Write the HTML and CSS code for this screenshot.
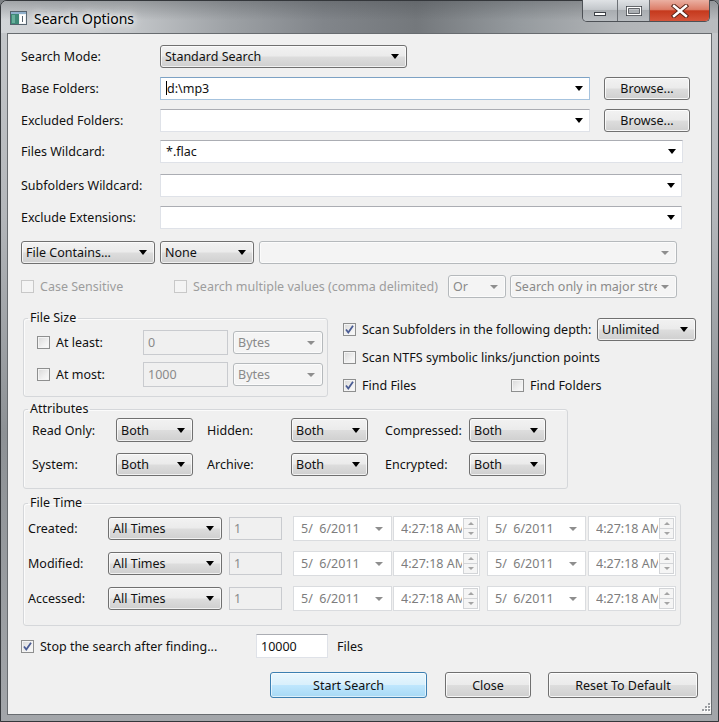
FILE: index.html
```html
<!DOCTYPE html>
<html lang="en">
<head>
    <meta charset="UTF-8">
    <title>Search Options</title>
    <link rel="stylesheet" href="styles.css">
</head>
<body>
<div class="window">
    <div class="titlebar">
        <svg class="app-icon" width="17" height="14" viewBox="0 0 17 14">
            <rect x="0.5" y="0.5" width="16" height="13" fill="#eef1f3" stroke="#56636e"/>
            <rect x="1" y="1" width="15" height="2" fill="#8fb0cc"/>
            <rect x="1" y="3" width="8" height="10" fill="#3f8a78"/>
            <rect x="2" y="4" width="3" height="8" fill="#68b09c"/>
            <rect x="10" y="4" width="5" height="8" fill="#ffffff"/>
            <rect x="12" y="5" width="1" height="6" fill="#56636e"/>
        </svg>
        <span class="title">Search Options</span>
        <div class="caption">
            <div class="cap cap-min">
                <svg width="14" height="6" viewBox="0 0 14 6"><rect x="1.5" y="1.5" width="11" height="3" fill="#fff" stroke="#3c4046"/></svg>
            </div>
            <div class="cap cap-max">
                <svg width="16" height="10" viewBox="0 0 16 10"><rect x="1.5" y="1.5" width="13" height="7" fill="none" stroke="#3c4046" stroke-width="3"/><rect x="1.5" y="1.5" width="13" height="7" fill="none" stroke="#fff" stroke-width="1.4"/></svg>
            </div>
            <div class="cap cap-close">
                <svg width="22" height="14" viewBox="0 0 22 14"><path d="M5 2 L17 12 M17 2 L5 12" stroke="#5a2418" stroke-width="4.4" stroke-linecap="square"/><path d="M5 2 L17 12 M17 2 L5 12" stroke="#fff" stroke-width="2.4" stroke-linecap="square"/></svg>
            </div>
        </div>
    </div>

    <div class="client">
        <div class="row">
            <span class="lbl">Search Mode:</span>
            <div class="combo" style="width:247px"><span>Standard Search</span></div>
        </div>
        <div class="row mt9">
            <span class="lbl">Base Folders:</span>
            <div class="cedit focus" style="width:430px"><span><i class="caret"></i>d:\mp3</span></div>
            <div class="btn browse">Browse...</div>
        </div>
        <div class="row mt9">
            <span class="lbl">Excluded Folders:</span>
            <div class="cedit" style="width:430px"><span></span></div>
            <div class="btn browse">Browse...</div>
        </div>
        <div class="row mt8">
            <span class="lbl">Files Wildcard:</span>
            <div class="cedit" style="width:523px"><span>*.flac</span></div>
        </div>
        <div class="row mt11">
            <span class="lbl">Subfolders Wildcard:</span>
            <div class="cedit" style="width:522px"><span></span></div>
        </div>
        <div class="row mt9">
            <span class="lbl">Exclude Extensions:</span>
            <div class="cedit" style="width:522px"><span></span></div>
        </div>
        <div class="row mt12">
            <div class="combo" style="width:134px"><span>File Contains...</span></div>
            <div class="combo ml5" style="width:94px"><span>None</span></div>
            <div class="combo dis ml5" style="width:418px"><span></span></div>
        </div>
        <div class="row mt11">
            <label class="check dis" style="width:153px"><span class="cb"></span>Case Sensitive</label>
            <label class="check dis" style="width:274px"><span class="cb"></span>Search multiple values (comma delimited)</label>
            <div class="combo dis" style="width:58px"><span>Or</span></div>
            <div class="combo dis ml4" style="width:167px"><span>Search only in major streams</span></div>
        </div>

        <div class="mid">
            <fieldset class="group size-group">
                <legend>File Size</legend>
                <div class="size-row">
                    <label class="check" style="width:106px"><span class="cb"></span>At least:</label>
                    <div class="edit dis" style="width:85px">0</div>
                    <div class="combo dis ml5" style="width:90px"><span>Bytes</span></div>
                </div>
                <div class="size-row mt7">
                    <label class="check" style="width:106px"><span class="cb"></span>At most:</label>
                    <div class="edit dis" style="width:85px">1000</div>
                    <div class="combo dis ml5" style="width:90px"><span>Bytes</span></div>
                </div>
            </fieldset>
            <div class="scan">
                <div class="row">
                    <label class="check" style="width:254px"><span class="cb on"><svg width="11" height="11" viewBox="0 0 11 11"><path d="M2 5.5 L4.3 8.5 L9 1.8" fill="none" stroke="#4a5c94" stroke-width="1.8"/></svg></span>Scan Subfolders in the following depth:</label>
                    <div class="combo" style="width:99px"><span>Unlimited</span></div>
                </div>
                <div class="row short mt6">
                    <label class="check"><span class="cb"></span>Scan NTFS symbolic links/junction points</label>
                </div>
                <div class="row short mt8">
                    <label class="check" style="width:168px"><span class="cb on"><svg width="11" height="11" viewBox="0 0 11 11"><path d="M2 5.5 L4.3 8.5 L9 1.8" fill="none" stroke="#4a5c94" stroke-width="1.8"/></svg></span>Find Files</label>
                    <label class="check"><span class="cb"></span>Find Folders</label>
                </div>
            </div>
        </div>

        <fieldset class="group attr-group">
            <legend>Attributes</legend>
            <div class="attr-row">
                <span class="alabel">Read Only:</span>
                <div class="combo" style="width:77px;height:24px"><span>Both</span></div>
                <span class="alabel ml14">Hidden:</span>
                <div class="combo" style="width:77px;height:24px"><span>Both</span></div>
                <span class="alabel ml17">Compressed:</span>
                <div class="combo" style="width:77px;height:24px"><span>Both</span></div>
            </div>
            <div class="attr-row mt10">
                <span class="alabel">System:</span>
                <div class="combo" style="width:77px"><span>Both</span></div>
                <span class="alabel ml14">Archive:</span>
                <div class="combo" style="width:77px"><span>Both</span></div>
                <span class="alabel ml17">Encrypted:</span>
                <div class="combo" style="width:77px"><span>Both</span></div>
            </div>
        </fieldset>

        <fieldset class="group time-group">
            <legend>File Time</legend>
            <div class="time-row">
                <span class="tlabel">Created:</span>
                <div class="combo" style="width:114px"><span>All Times</span></div>
                <div class="edit dis ml7" style="width:53px;height:23px">1</div>
                <div class="date ml11"><span>5/&nbsp; 6/2011</span></div>
                <div class="time ml1"><span>4:27:18 AM</span><div class="spin"><b class="up"></b><b class="down"></b></div></div>
                <div class="date ml7"><span>5/&nbsp; 6/2011</span></div>
                <div class="time ml2" style="width:88px"><span>4:27:18 AM</span><div class="spin"><b class="up"></b><b class="down"></b></div></div>
            </div>
            <div class="time-row mt10">
                <span class="tlabel">Modified:</span>
                <div class="combo" style="width:114px"><span>All Times</span></div>
                <div class="edit dis ml7" style="width:53px;height:23px">1</div>
                <div class="date ml11"><span>5/&nbsp; 6/2011</span></div>
                <div class="time ml1"><span>4:27:18 AM</span><div class="spin"><b class="up"></b><b class="down"></b></div></div>
                <div class="date ml7"><span>5/&nbsp; 6/2011</span></div>
                <div class="time ml2" style="width:88px"><span>4:27:18 AM</span><div class="spin"><b class="up"></b><b class="down"></b></div></div>
            </div>
            <div class="time-row mt10">
                <span class="tlabel">Accessed:</span>
                <div class="combo" style="width:114px"><span>All Times</span></div>
                <div class="edit dis ml7" style="width:53px;height:23px">1</div>
                <div class="date ml11"><span>5/&nbsp; 6/2011</span></div>
                <div class="time ml1"><span>4:27:18 AM</span><div class="spin"><b class="up"></b><b class="down"></b></div></div>
                <div class="date ml7"><span>5/&nbsp; 6/2011</span></div>
                <div class="time ml2" style="width:88px"><span>4:27:18 AM</span><div class="spin"><b class="up"></b><b class="down"></b></div></div>
            </div>
        </fieldset>

        <div class="row stop-row">
            <label class="check" style="width:235px"><span class="cb on"><svg width="11" height="11" viewBox="0 0 11 11"><path d="M2 5.5 L4.3 8.5 L9 1.8" fill="none" stroke="#4a5c94" stroke-width="1.8"/></svg></span>Stop the search after finding...</label>
            <div class="edit" style="width:72px;height:24px">10000</div>
            <span class="files">Files</span>
        </div>

        <div class="buttons">
            <div class="btn default" style="width:157px">Start Search</div>
            <div class="btn" style="width:86px;margin-left:18px">Close</div>
            <div class="btn" style="width:150px;margin-left:17px">Reset To Default</div>
        </div>

        <svg class="grip" width="12" height="12" viewBox="0 0 12 12">
            <g fill="#fff"><rect x="10" y="2" width="2" height="2"/><rect x="7" y="5" width="2" height="2"/><rect x="10" y="5" width="2" height="2"/><rect x="4" y="8" width="2" height="2"/><rect x="7" y="8" width="2" height="2"/><rect x="10" y="8" width="2" height="2"/></g>
            <g fill="#9a9da1"><rect x="9" y="1" width="2" height="2"/><rect x="6" y="4" width="2" height="2"/><rect x="9" y="4" width="2" height="2"/><rect x="3" y="7" width="2" height="2"/><rect x="6" y="7" width="2" height="2"/><rect x="9" y="7" width="2" height="2"/></g>
        </svg>
    </div>
</div>
</body>
</html>
```

FILE: styles.css
```css
/* reset */
* {
    margin: 0;
    padding: 0;
    box-sizing: border-box;
}
body {
    width: 719px;
    height: 722px;
    overflow: hidden;
    background: #7c8084;
    font-family: "Noto Sans", "Open Sans", sans-serif;
    font-size: 12.5px;
    color: #111;
}

/* window frame */
.window {
    width: 719px;
    height: 722px;
    display: flex;
    flex-direction: column;
    padding: 0 6px 6px;
    border: 1px solid #34373b;
    border-radius: 7px 7px 0 0;
    background: linear-gradient(180deg, #c6c9cc 0%, #b3b6ba 30%, #8d9195 60%, #a3a6aa 100%);
}
.titlebar {
    height: 32px;
    margin: 0 -6px;
    display: flex;
    align-items: center;
    padding-left: 9px;
    border-radius: 6px 6px 0 0;
    background:
        linear-gradient(180deg, rgba(70,74,78,.35) 0%, rgba(70,74,78,0) 60%),
        linear-gradient(90deg, #d2d5d8 0%, #c4c7ca 18%, #9da1a5 32%, #81858a 45%, #74787c 58%, #959a9e 72%, #b1b4b7 86%, #b9bcbf 100%);
}
.app-icon {
    flex: none;
    margin-top: 2px;
}
.title {
    margin-left: 7px;
    margin-top: 2px;
    font-size: 14px;
    color: #000;
    text-shadow: 0 0 6px #fff, 0 0 10px #fff, 0 0 14px rgba(255,255,255,.9);
}
.caption {
    margin-left: auto;
    margin-right: 8px;
    align-self: flex-start;
    display: flex;
    height: 22px;
    margin-top: -1px;
    border: 1px solid #4d5156;
    border-top: none;
    border-radius: 0 0 5px 5px;
    overflow: hidden;
}
.cap {
    display: flex;
    align-items: center;
    justify-content: center;
}
.cap-min, .cap-max {
    background: linear-gradient(180deg, #dfe2e5 0%, #c3c7cb 45%, #a9adb1 50%, #b8bcc0 100%);
    border-right: 1px solid #6c7075;
}
.cap-min {
    width: 35px;
    padding-top: 6px;
}
.cap-max {
    width: 32px;
}
.cap-close {
    width: 59px;
    background: linear-gradient(180deg, #eab0a2 0%, #dc7e69 45%, #c5391d 52%, #d4543a 100%);
}

.client {
    flex: 1;
    position: relative;
    background: #f0f0f0;
    border: 1px solid #686c70;
    padding: 11px 13px 0;
}

/* rows */
.row {
    display: flex;
    align-items: center;
    height: 23px;
}
.row.short {
    height: 20px;
}
.lbl {
    width: 139px;
    flex: none;
}
.mt6 { margin-top: 6px; }
.mt7 { margin-top: 7px; }
.mt8 { margin-top: 8px; }
.mt9 { margin-top: 9px; }
.mt10 { margin-top: 10px; }
.mt11 { margin-top: 11px; }
.mt12 { margin-top: 12px; }
.ml1 { margin-left: 1px; }
.ml2 { margin-left: 2px; }
.ml4 { margin-left: 4px; }
.ml5 { margin-left: 5px; }
.ml7 { margin-left: 7px; }
.ml11 { margin-left: 11px; }
.ml14 { margin-left: 14px; }
.ml17 { margin-left: 17px; }

/* drop-down list (button look) */
.combo {
    flex: none;
    height: 23px;
    display: flex;
    align-items: center;
    padding: 0 7px 0 4px;
    border: 1px solid #707070;
    border-radius: 3px;
    background: linear-gradient(180deg, #f2f2f2 0%, #ebebeb 48%, #dddddd 52%, #cfcfcf 100%);
    box-shadow: inset 0 0 0 1px rgba(255,255,255,.7);
    white-space: nowrap;
}
.combo span {
    flex: 1;
    overflow: hidden;
}
.combo::after {
    content: '';
    flex: none;
    margin-left: 4px;
    border-left: 4px solid transparent;
    border-right: 4px solid transparent;
    border-top: 5px solid #000;
}
.combo.dis {
    border-color: #b5b9bc;
    background: #f4f4f4;
    box-shadow: inset 0 0 0 1px #fbfbfb;
    color: #8a8a8a;
}
.combo.dis::after {
    border-top-color: #8e8e8e;
    border-left-width: 4px;
    border-right-width: 4px;
    border-top-width: 4px;
}

/* editable combo */
.cedit {
    flex: none;
    height: 23px;
    display: flex;
    align-items: center;
    padding: 0 6px 0 5px;
    background: #fff;
    border: 1px solid #dfe2e8;
    border-top-color: #abadb3;
}
.cedit.focus {
    border-color: #a6c3de;
    border-top-color: #7da2c4;
}
.cedit span {
    flex: 1;
}
.cedit::after {
    content: '';
    border-left: 4px solid transparent;
    border-right: 4px solid transparent;
    border-top: 5px solid #000;
}
.caret {
    display: inline-block;
    width: 1px;
    height: 14px;
    background: #000;
    vertical-align: -2px;
}

.edit {
    flex: none;
    height: 25px;
    display: flex;
    align-items: center;
    padding-left: 4px;
    background: #fff;
    border: 1px solid #dfe2e8;
    border-top-color: #abadb3;
}
.edit.dis {
    background: #f0f0f0;
    border: 1px solid #c9cbcf;
    color: #8a8a8a;
}

/* buttons */
.btn {
    flex: none;
    height: 26px;
    display: flex;
    align-items: center;
    justify-content: center;
    border: 1px solid #707070;
    border-radius: 3px;
    background: linear-gradient(180deg, #f2f2f2 0%, #ebebeb 48%, #dddddd 52%, #cfcfcf 100%);
    box-shadow: inset 0 0 0 1px rgba(255,255,255,.8);
}
.btn.browse {
    width: 86px;
    height: 23px;
    margin-left: 14px;
}
.btn.default {
    border-color: #3c7fb1;
    background: linear-gradient(180deg, #eaf6fd 0%, #d9f0fc 48%, #bee6fd 52%, #a7d9f5 100%);
    box-shadow: inset 0 0 0 1px rgba(255,255,255,.6);
}

/* checkboxes */
.check {
    flex: none;
    display: flex;
    align-items: center;
    white-space: nowrap;
}
.cb {
    flex: none;
    width: 13px;
    height: 13px;
    margin-right: 6px;
    display: flex;
    border: 1px solid #8e8f8f;
    background: linear-gradient(135deg, #d8d8d8 0%, #f0f0f0 60%, #fbfbfb 100%);
    box-shadow: inset 0 0 0 1px #f4f4f4;
}
.check.dis {
    color: #9d9d9d;
}
.check.dis .cb {
    border-color: #c8c8c8;
    background: #f4f4f4;
}

/* group boxes */
.group {
    flex: none;
    border: 1px solid #d5d7da;
    border-radius: 3px;
    padding: 0 4px;
    box-shadow: inset 1px 1px 0 #fbfbfb;
}
.group legend {
    padding: 0 2px;
    line-height: 14px;
    color: #111;
}
.mid {
    display: flex;
    margin: 13px 0 0 2px;
    height: 86px;
}
.size-group {
    width: 305px;
    height: 86px;
    padding-top: 5px;
}
.size-row {
    display: flex;
    align-items: center;
    height: 25px;
    margin-left: 9px;
}
.scan {
    margin-left: 15px;
    padding-top: 7px;
}
.attr-group {
    width: 545px;
    height: 87px;
    margin: 5px 0 0 2px;
    padding-top: 2px;
}
.attr-row {
    display: flex;
    align-items: center;
    height: 24px;
    margin-left: 4px;
}
.alabel {
    width: 84px;
    flex: none;
}
.time-group {
    width: 658px;
    height: 130px;
    margin: 7px 0 0 2px;
    padding-top: 6px;
}
.time-row {
    display: flex;
    align-items: center;
    height: 25px;
}
.tlabel {
    width: 80px;
    flex: none;
}

/* date / time pickers (disabled) */
.date, .time {
    flex: none;
    height: 25px;
    display: flex;
    align-items: center;
    background: #fff;
    border: 1px solid #dadcdf;
    color: #7d7d7d;
    white-space: nowrap;
}
.date {
    width: 99px;
    padding: 0 8px 0 7px;
}
.date span {
    flex: 1;
}
.date::after {
    content: '';
    border-left: 4px solid transparent;
    border-right: 4px solid transparent;
    border-top: 4px solid #8e8e8e;
}
.time {
    width: 87px;
    padding-left: 7px;
}
.time span {
    flex: 1;
    overflow: hidden;
}
.spin {
    flex: none;
    width: 15px;
    height: 21px;
    margin: 0 1px;
    display: flex;
    flex-direction: column;
    border: 1px solid #d2d4d7;
    background: #f5f5f5;
}
.spin b {
    flex: 1;
    display: flex;
    align-items: center;
    justify-content: center;
}
.spin b + b {
    border-top: 1px solid #d2d4d7;
}
.spin .up::after {
    content: '';
    border-left: 3px solid transparent;
    border-right: 3px solid transparent;
    border-bottom: 3px solid #a4a4a4;
}
.spin .down::after {
    content: '';
    border-left: 3px solid transparent;
    border-right: 3px solid transparent;
    border-top: 3px solid #a4a4a4;
}

/* bottom */
.stop-row {
    height: 24px;
    margin-top: 8px;
}
.files {
    margin-left: 9px;
}
.buttons {
    display: flex;
    justify-content: flex-end;
    margin-top: 14px;
}
.grip {
    position: absolute;
    right: 0;
    bottom: 0;
}
```
